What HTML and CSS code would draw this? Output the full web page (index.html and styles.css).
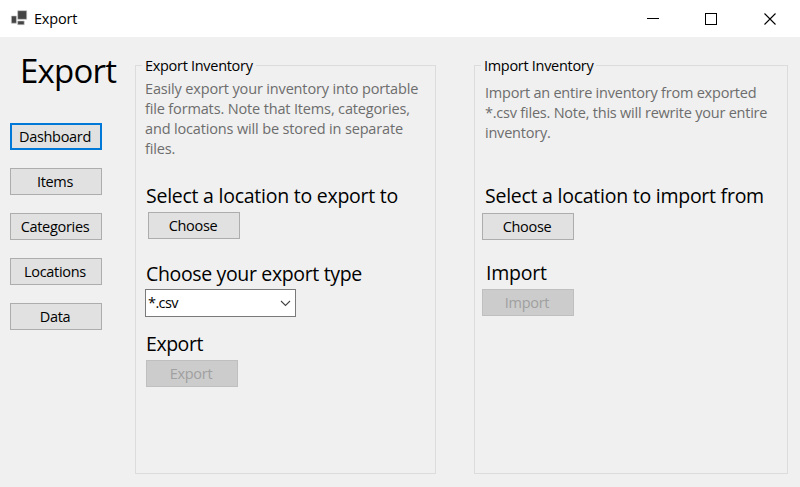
FILE: index.html
```html
<!DOCTYPE html>
<html lang="en">
<head>
<meta charset="utf-8">
<title>Export</title>
<link rel="stylesheet" href="styles.css">
</head>
<body>
<header class="titlebar">
  <svg class="app-icon" width="18" height="18" viewBox="0 0 18 18"><g fill="#444" stroke="#c4c4c4" stroke-width=".6"><path d="M7.700.7h9v8.600h-9zM1.400 6h5v7.200h-5zM7.700 11h6.500v3.700H7.700z"/></g></svg>
  <span class="window-title">Export</span>
  <svg class="controls" width="132" height="14" viewBox="0 0 132 14" fill="none" stroke="#000" shape-rendering="crispEdges"><path d="M0 6.500h12M58.500 1.500h11v11h-11z"/><path d="M117.500 1.500l11 11M128.500 1.500l-11 11" shape-rendering="auto" stroke-width="1.100"/></svg>
</header>
<main class="content">
  <nav class="sidebar">
    <h1 class="page-title">Export</h1>
    <button class="btn focused">Dashboard</button>
    <button class="btn">Items</button>
    <button class="btn">Categories</button>
    <button class="btn">Locations</button>
    <button class="btn">Data</button>
  </nav>
  <section class="group export-group">
    <h2 class="legend">Export Inventory</h2>
    <p class="description">Easily export your inventory into portable<br>file formats. Note that Items, categories,<br>and locations will be stored in separate<br>files.</p>
    <h3 class="heading location">Select a location to export to</h3>
    <button class="btn choose">Choose</button>
    <h3 class="heading type">Choose your export type</h3>
    <div class="select"><span>*.csv</span><svg width="11" height="7" viewBox="0 0 11 7" fill="none" stroke="#444" stroke-width="1.100"><path d="M1 1l4.500 4.500L10 1"/></svg></div>
    <h3 class="heading action">Export</h3>
    <button class="btn" disabled>Export</button>
  </section>
  <section class="group import-group">
    <h2 class="legend">Import Inventory</h2>
    <p class="description">Import an entire inventory from exported<br>*.csv files. Note, this will rewrite your entire<br>inventory.</p>
    <h3 class="heading location">Select a location to import from</h3>
    <button class="btn choose">Choose</button>
    <h3 class="heading action">Import</h3>
    <button class="btn" disabled>Import</button>
  </section>
</main>
</body>
</html>
```

FILE: styles.css
```css
* { box-sizing: border-box; }
body {
  margin: 0;
  width: 800px;
  height: 487px;
  overflow: hidden;
  background: #f0f0f0;
  color: #000;
  font: 14.500px/20px "Open Sans", sans-serif;
  letter-spacing: -0.3px;
  white-space: nowrap;
}
h1, h2, h3, p { margin: 0; font-weight: 400; }
.titlebar {
  display: flex;
  align-items: center;
  height: 37px;
  padding: 0 22px 0 10px;
  background: #fff;
}
.app-icon { margin-right: 6px; }
.window-title { font-size: 14.500px; letter-spacing: -0.2px; }
.controls { margin: 0 -1px 0 auto; }
.content { display: flex; height: 450px; align-items: flex-start; }
.sidebar {
  display: flex;
  flex-direction: column;
  gap: 18px;
  width: 135px;
  padding: 12px 0 0 10px;
}
.page-title {
  height: 44px;
  margin: 0 0 12px 10px;
  font-size: 33px;
  line-height: 44px;
  letter-spacing: -0.8px;
}
.btn {
  flex: none;
  width: 92px;
  height: 27px;
  padding: 0 2px 0 0;
  border: 1px solid #adadad;
  background: #e1e1e1;
  color: #000;
  font: inherit;
  line-height: 25px;
  letter-spacing: inherit;
}
.btn.focused { border: 2px solid #0078d7; line-height: 23px; }
.btn:disabled { border-color: #bfbfbf; background: #ccc; color: #a0a0a0; }
.group {
  display: flex;
  flex-direction: column;
  align-items: flex-start;
  height: 409px;
  margin-top: 28px;
  border: 1px solid #dcdcdc;
}
.export-group { width: 301px; padding-left: 10px; }
.import-group { width: 314px; margin-left: 38px; padding-left: 7px; }
.legend {
  height: 20px;
  margin: -10px 0 0 -4px;
  padding: 0 3px;
  background: #f0f0f0;
  font-size: 14.500px;
  line-height: 20px;
}
.import-group .legend { margin-left: -1px; }
.description { margin-top: 3px; margin-left: -1px; color: #6d6d6d; letter-spacing: -0.15px; }
.heading { height: 26px; font-size: 19.500px; line-height: 26px; letter-spacing: -0.25px; }
.export-group .location { margin-top: 24px; }
.export-group .choose { margin: 3px 0 0 2px; }
.export-group .type { margin-top: 22px; letter-spacing: -0.35px; }
.select {
  display: flex;
  align-items: center;
  justify-content: space-between;
  width: 151px;
  height: 28px;
  margin: 2px 0 0 -1px;
  padding: 0 4px 0 2px;
  border: 1px solid #7a7a7a;
  background: #fff;
}
.select span { letter-spacing: -0.6px; }
.export-group .action { margin: 14px 0 3px; letter-spacing: -0.45px; }
.import-group .description { margin: 7px 0 0 3px; letter-spacing: -0.22px; }
.import-group .location { margin: 40px 0 0 3px; }
.import-group .choose { margin-top: 4px; }
.import-group .action { margin: 20px 0 3px 4px; }
```
